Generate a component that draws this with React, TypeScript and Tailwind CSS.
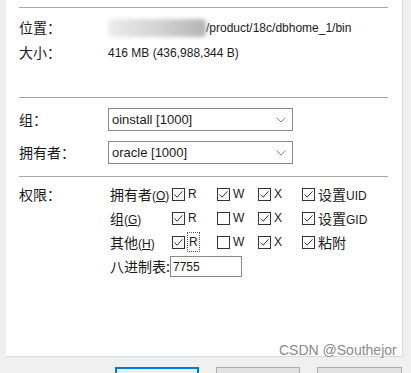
import React from 'react';

const cjk = "font-['Noto_Sans_CJK_SC','Microsoft_YaHei',sans-serif]";
const latin = "font-['Liberation_Sans','Noto_Sans_CJK_SC',sans-serif]";

const Check = ({ checked }: { checked: boolean }) => (
  <span className="w-[13px] h-[13px] border border-[#333] bg-white flex items-center justify-center shrink-0">
    {checked && (
      <svg width="11" height="11" viewBox="0 0 11 11">
        <path d="M1.5 5.5 L4.2 8.2 L9.5 2.2" fill="none" stroke="#333" strokeWidth="1" />
      </svg>
    )}
  </span>
);

const Chevron = () => (
  <svg width="10" height="6" viewBox="0 0 10 6">
    <path d="M0.5 0.5 L5 5 L9.5 0.5" fill="none" stroke="#888" strokeWidth="1" />
  </svg>
);

const Sep = ({ mt }: { mt: string }) => <div className={`h-px bg-[#a8a8a8] w-[369px] ${mt}`} />;

const Label = ({ text }: { text: string }) => (
  <div className={`w-[89px] shrink-0 text-[14px] text-[#1a1a1a] ${cjk}`}>{text}</div>
);

type Cell = { on: boolean; label: React.ReactNode; w: string; focus?: boolean };

const PermRow = ({ name, key1, cells }: { name: string; key1: string; cells: Cell[] }) => (
  <div className="h-[24px] flex items-center">
    <div className={`w-[62px] shrink-0 text-[14px] text-[#1a1a1a] ${cjk} flex items-baseline`}>
      {name}
      <span className={`text-[12px] ${latin}`}>
        (<span className="underline">{key1}</span>)
      </span>
    </div>
    {cells.map((c, i) => (
      <div key={i} className={`flex items-center ${c.w}`}>
        <Check checked={c.on} />
        <span
          className={`ml-[3px] text-[12px] text-[#1a1a1a] ${latin} ${
            c.focus ? 'outline outline-1 outline-dotted outline-[#555] px-px' : ''
          }`}
        >
          {c.label}
        </span>
      </div>
    ))}
  </div>
);

const Special = ({ cn, en }: { cn: string; en?: string }) => (
  <span className="flex items-baseline">
    <span className={`text-[14px] ${cjk}`}>{cn}</span>
    {en && <span className={`text-[12px] ${latin}`}>{en}</span>}
  </span>
);

export default function App() {
  return (
    <div className="w-[411px] h-[373px] bg-[#f0f0f0] relative overflow-hidden">
      <div className="ml-[6px] w-[397px] h-[357px] bg-white border-r border-b border-[#dadada] pl-[13px] pt-[7px]">
        <Sep mt="mt-0" />

        <div className="mt-[7px] h-[25px] flex items-center">
          <Label text="位置：" />
          <div className="relative w-[98px] h-[24px] shrink-0">
            <div className="absolute inset-x-0 top-[3px] h-[18px] bg-gradient-to-r from-[#ececec] via-[#d4d4d4] to-[#b4b4b4] blur-[2px] rounded-sm" />
          </div>
          <span className={`text-[12px] text-[#1a1a1a] ${latin}`}>/product/18c/dbhome_1/bin</span>
        </div>
        <div className="h-[25px] flex items-center">
          <Label text="大小：" />
          <span className={`text-[12px] text-[#1a1a1a] ${latin}`}>416 MB (436,988,344 B)</span>
        </div>

        <Sep mt="mt-[32px]" />

        <div className="mt-[10px] h-[23px] flex items-center">
          <Label text="组：" />
          <div className="w-[185px] h-[23px] border border-[#8a8a8a] flex items-center justify-between pl-[3px] pr-[6px]">
            <span className={`text-[13px] text-[#1a1a1a] ${latin}`}>oinstall [1000]</span>
            <Chevron />
          </div>
        </div>
        <div className="mt-[10px] h-[23px] flex items-center">
          <Label text="拥有者：" />
          <div className="w-[185px] h-[23px] border border-[#8a8a8a] flex items-center justify-between pl-[3px] pr-[6px]">
            <span className={`text-[13px] text-[#1a1a1a] ${latin}`}>oracle [1000]</span>
            <Chevron />
          </div>
        </div>

        <Sep mt="mt-[12px]" />

        <div className="mt-[5px] flex">
          <div className="w-[91px] shrink-0 h-[24px] flex items-center">
            <span className={`text-[14px] text-[#1a1a1a] ${cjk}`}>权限：</span>
          </div>
          <div className="flex flex-col">
            <PermRow
              name="拥有者"
              key1="O"
              cells={[
                { on: true, label: 'R', w: 'w-[45px]' },
                { on: true, label: 'W', w: 'w-[41px]' },
                { on: true, label: 'X', w: 'w-[44px]' },
                { on: true, label: <Special cn="设置" en="UID" />, w: '' },
              ]}
            />
            <PermRow
              name="组"
              key1="G"
              cells={[
                { on: true, label: 'R', w: 'w-[45px]' },
                { on: false, label: 'W', w: 'w-[41px]' },
                { on: true, label: 'X', w: 'w-[44px]' },
                { on: true, label: <Special cn="设置" en="GID" />, w: '' },
              ]}
            />
            <PermRow
              name="其他"
              key1="H"
              cells={[
                { on: true, label: 'R', w: 'w-[45px]', focus: true },
                { on: false, label: 'W', w: 'w-[41px]' },
                { on: true, label: 'X', w: 'w-[44px]' },
                { on: true, label: <Special cn="粘附" />, w: '' },
              ]}
            />
            <div className="mt-[2px] h-[21px] flex items-center">
              <span className={`w-[60px] text-[14px] text-[#1a1a1a] ${cjk} whitespace-nowrap overflow-hidden`}>八进制表:</span>
              <div className="w-[72px] h-[21px] border border-[#8a8a8a] flex items-center pl-[2px]">
                <span className={`text-[12px] text-[#1a1a1a] ${latin}`}>7755</span>
              </div>
            </div>
          </div>
        </div>
      </div>

      <div className="flex mt-[10px] ml-[115px] gap-[17px]">
        <div className="w-[84px] h-[20px] border-2 border-[#0078d7] bg-[#e5f1fb]" />
        <div className="w-[84px] h-[20px] border border-[#adadad] bg-[#e1e1e1]" />
        <div className="w-[85px] h-[20px] border border-[#adadad] bg-[#e1e1e1]" />
      </div>

      <div className={`absolute left-[279px] top-[340px] text-[14px] text-[#8a8a8a] ${latin} [text-shadow:0_0_2px_#fff]`}>
        CSDN @Southejor
      </div>
    </div>
  );
}
